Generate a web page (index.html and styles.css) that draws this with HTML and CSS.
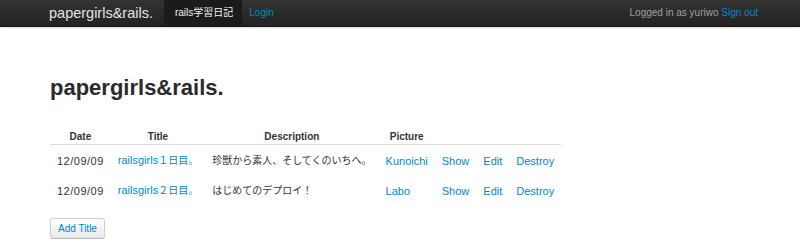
FILE: index.html
```html
<!DOCTYPE html>
<html lang="ja">
<head>
<meta charset="utf-8">
<title>papergirls&amp;rails.</title>
<link rel="stylesheet" href="styles.css">
</head>
<body>
<div class="navbar">
  <div class="nav-left">
    <a class="brand" href="#">papergirls&amp;rails.</a>
    <ul class="nav">
      <li class="active"><a href="#">rails学習日記</a></li>
      <li class="login"><a href="#">Login</a></li>
    </ul>
  </div>
  <div class="nav-right">
    <span class="user">Logged in as yuriwo</span> <a href="#">Sign out</a>
  </div>
</div>
<div class="container">
  <h1 class="title">papergirls&amp;rails.</h1>
  <table class="table">
    <thead>
      <tr>
        <th>Date</th>
        <th>Title</th>
        <th>Description</th>
        <th>Picture</th>
        <th></th>
        <th></th>
        <th></th>
      </tr>
    </thead>
    <tbody>
      <tr>
        <td class="date">12/09/09</td>
        <td><a href="#">railsgirls<span class="ja">１日目。</span></a></td>
        <td class="ja">珍獣から素人、そしてくのいちへ。</td>
        <td><a href="#">Kunoichi</a></td>
        <td><a href="#">Show</a></td>
        <td><a href="#">Edit</a></td>
        <td><a href="#">Destroy</a></td>
      </tr>
      <tr>
        <td class="date">12/09/09</td>
        <td><a href="#">railsgirls<span class="ja">２日目。</span></a></td>
        <td class="ja">はじめてのデプロイ！</td>
        <td><a href="#">Labo</a></td>
        <td><a href="#">Show</a></td>
        <td><a href="#">Edit</a></td>
        <td><a href="#">Destroy</a></td>
      </tr>
    </tbody>
  </table>
  <div class="actions">
    <a class="btn" href="#">Add Title</a>
  </div>
</div>
</body>
</html>
```
FILE: styles.css
```css
html, body {
  margin: 0;
  padding: 0;
  background: #fff;
  font-family: "Liberation Sans", Arial, "Noto Sans CJK JP", sans-serif;
  color: #333;
}
a {
  color: #0088cc;
  text-decoration: none;
}
.navbar {
  height: 26px;
  background: linear-gradient(#333333, #222222);
  border-bottom: 1px solid #121212;
  box-shadow: 0 1px 2px rgba(0,0,0,0.15);
  display: flex;
  justify-content: space-between;
  align-items: stretch;
  font-size: 10px;
}
.nav-left {
  display: flex;
  align-items: stretch;
  padding-left: 49px;
}
.brand {
  color: #e2e2e2;
  font-size: 14.5px;
  line-height: 26px;
  margin-right: 11px;
}
.nav {
  list-style: none;
  margin: 0;
  padding: 0;
  display: flex;
}
.nav li {
  display: flex;
}
.nav li a {
  line-height: 26px;
  padding: 0 7px;
}
.nav li.active a {
  background: #1b1b1b;
  color: #f2f2f2;
  padding: 0 9px 0 11px;
}
.nav-right {
  padding-right: 42px;
  line-height: 26px;
}
.user {
  color: #a0a0a0;
}
.container {
  padding: 0 50px;
}
.title {
  margin: 50px 0 0;
  font-size: 22px;
  line-height: 22px;
  font-weight: bold;
  color: #2a2a2a;
}
.table {
  margin-top: 30px;
  border-collapse: collapse;
  font-size: 11px;
}
.table th {
  font-size: 10px;
  font-weight: bold;
  line-height: 15px;
  padding: 0 7px;
  text-align: center;
  border-bottom: 1px solid #dddddd;
}
.table td {
  line-height: 16px;
  padding: 7px 7px 6px;
  text-align: left;
  white-space: nowrap;
}
.table td.date {
  letter-spacing: 0.5px;
}
.ja {
  font-size: 10px;
}
.actions {
  display: flex;
  margin-top: 13px;
}
.btn {
  display: block;
  font-size: 10px;
  line-height: 15px;
  padding: 2px 7px;
  border: 1px solid #cfcfcf;
  border-bottom-color: #b5b5b5;
  border-radius: 3px;
  background: linear-gradient(#ffffff, #e8e8e8);
  box-shadow: inset 0 1px 0 rgba(255,255,255,0.2), 0 1px 2px rgba(0,0,0,0.05);
}
```
